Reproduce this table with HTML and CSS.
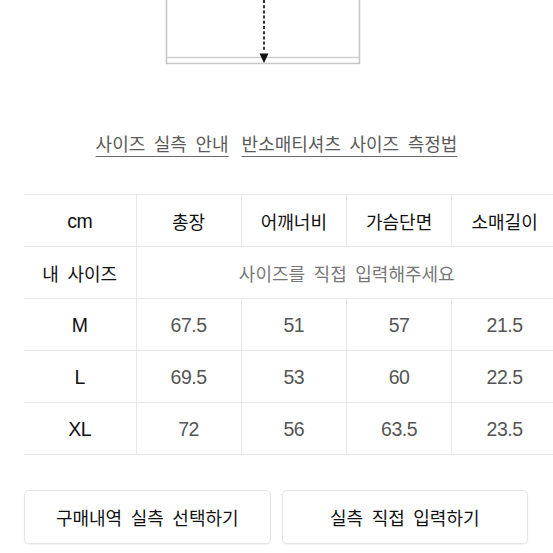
FILE: index.html
```html
<!DOCTYPE html>
<html lang="ko">
<head>
<meta charset="utf-8">
<link rel="stylesheet" href="styles.css">
</head>
<body>
<div class="page">
  <div class="diagram">
    <svg width="553" height="70" viewBox="0 0 553 70" xmlns="http://www.w3.org/2000/svg">
      <path d="M166.5 0 V63.5 H359.5 V0" fill="none" stroke="#c6c6c6" stroke-width="1.6"/>
      <path d="M166.5 57.5 H359.5" fill="none" stroke="#cfcfcf" stroke-width="1.4"/>
      <path d="M264 0 V52" fill="none" stroke="#333" stroke-width="2" stroke-dasharray="3 2.2"/>
      <path d="M259.5 53.5 H268.5 L264 63 Z" fill="#111"/>
    </svg>
  </div>

  <div class="links">
    <a class="link" href="#">사이즈 실측 안내</a>
    <a class="link" href="#">반소매티셔츠 사이즈 측정법</a>
  </div>

  <div class="table-wrap">
    <table class="size-table">
      <colgroup>
        <col class="col-first">
        <col><col><col><col>
      </colgroup>
      <tr class="head">
        <td class="lat dark">cm</td>
        <td class="ko dark">총장</td>
        <td class="ko dark">어깨너비</td>
        <td class="ko dark">가슴단면</td>
        <td class="ko dark">소매길이</td>
      </tr>
      <tr>
        <td class="ko dark">내 사이즈</td>
        <td class="ko hint" colspan="4">사이즈를 직접 입력해주세요</td>
      </tr>
      <tr>
        <td class="lat dark">M</td>
        <td class="lat num">67.5</td>
        <td class="lat num">51</td>
        <td class="lat num">57</td>
        <td class="lat num">21.5</td>
      </tr>
      <tr>
        <td class="lat dark">L</td>
        <td class="lat num">69.5</td>
        <td class="lat num">53</td>
        <td class="lat num">60</td>
        <td class="lat num">22.5</td>
      </tr>
      <tr>
        <td class="lat dark">XL</td>
        <td class="lat num">72</td>
        <td class="lat num">56</td>
        <td class="lat num">63.5</td>
        <td class="lat num">23.5</td>
      </tr>
    </table>
  </div>

  <div class="actions">
    <button class="btn" type="button">구매내역 실측 선택하기</button>
    <button class="btn" type="button">실측 직접 입력하기</button>
  </div>
</div>
</body>
</html>
```

FILE: styles.css
```css
html, body {
  margin: 0;
  padding: 0;
  background: #fff;
}

body {
  width: 553px;
  height: 553px;
  overflow: hidden;
  font-family: "Noto Sans CJK KR", "Liberation Sans", sans-serif;
  color: #111;
}

.page {
  display: flex;
  flex-direction: column;
}

.diagram {
  height: 70px;
}

.diagram svg {
  display: block;
}

.links {
  display: flex;
  justify-content: center;
  gap: 13px;
  padding-top: 61px;
  height: 24px;
  line-height: 24px;
}

.link {
  font-size: 18px;
  word-spacing: 3.5px;
  color: #5a5a5a;
  text-decoration: underline;
  text-decoration-color: #6a6a6a;
  text-underline-offset: 5px;
  text-decoration-thickness: 1.4px;
}

.table-wrap {
  margin-top: 39px;
  margin-left: 24px;
  width: 529px;
  overflow: hidden;
}

.size-table {
  width: 533px;
  table-layout: fixed;
  border-collapse: collapse;
  border-spacing: 0;
}

.col-first {
  width: 112px;
}

.size-table td {
  height: 51px;
  padding: 0;
  text-align: center;
  vertical-align: middle;
  border-top: 1px solid #e8e8e8;
  border-bottom: 1px solid #e8e8e8;
  border-left: 1px solid #e8e8e8;
  line-height: 24px;
  white-space: nowrap;
}

.size-table td:first-child {
  border-left: none;
}

.ko {
  font-family: "Noto Sans CJK KR", sans-serif;
  font-size: 18px;
  word-spacing: 3.5px;
}

.lat {
  font-family: "Liberation Sans", "Noto Sans CJK KR", sans-serif;
  font-size: 19.5px;
  letter-spacing: -0.4px;
}

.dark {
  color: #111;
}

.num {
  color: #555;
}

.hint {
  color: #777;
}

.actions {
  display: flex;
  gap: 11px;
  margin-top: 35px;
  padding: 0 25px 0 24px;
}

.btn {
  flex: 1;
  height: 54px;
  background: #fff;
  border: 1px solid #e4e4e4;
  border-radius: 5px;
  box-shadow: 0 1px 2px rgba(0, 0, 0, 0.06);
  font-family: "Noto Sans CJK KR", sans-serif;
  font-size: 18px;
  word-spacing: 3.5px;
  color: #111;
  padding: 0;
}
```
